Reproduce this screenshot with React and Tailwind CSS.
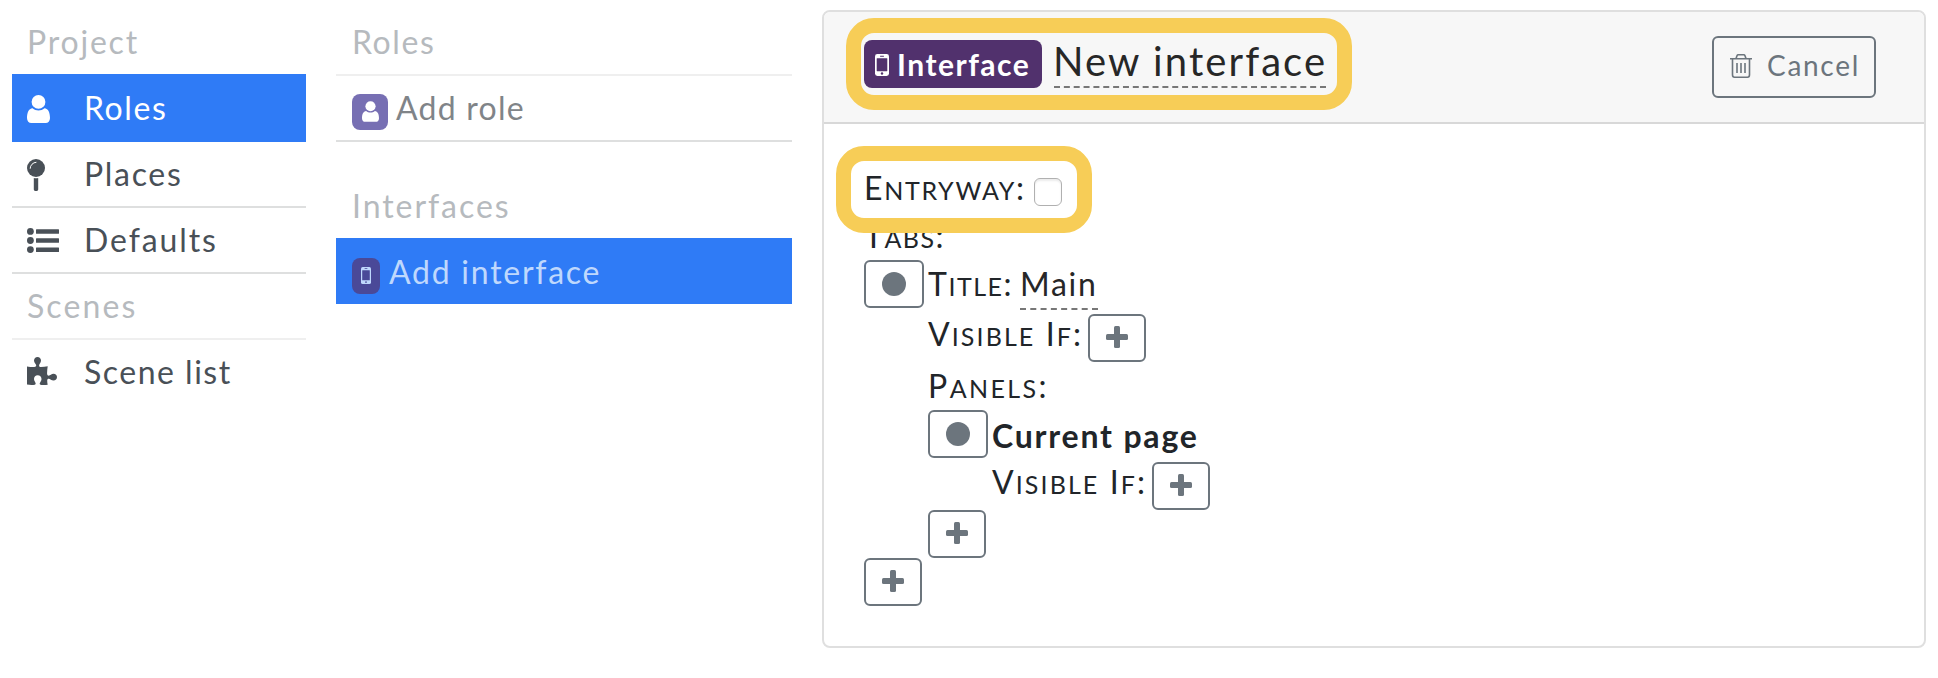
import React from "react";

function UserIcon({ className }) {
  return (
    <svg className={className} viewBox="0 0 23 28" fill="currentColor">
      <path d="M5.600 13.200C7.200 14.700 9.300 15.400 11.500 15.400s4.300-.7 5.900-2.200c4 .2 5.600 4.800 5.600 9.800 0 3-1.900 5-4.300 5H4.300C1.900 28 0 26 0 23c0-5 1.600-9.600 5.600-9.800Z" />
      <circle cx="11.500" cy="6.900" r="6.900" />
    </svg>
  );
}

function PhoneIcon({ className, hole }) {
  return (
    <svg className={className} viewBox="0 0 14 22" preserveAspectRatio="none" fill="currentColor">
      <rect width="14" height="22" rx="2.400" />
      <rect x="1.700" y="4.200" width="10.600" height="13" rx=".4" className={hole} />
      <rect x="5" y="1.700" width="4" height="1" rx=".4" className={hole} />
      <circle cx="7" cy="19.500" r="1.200" className={hole} />
    </svg>
  );
}

function PinIcon({ className }) {
  return (
    <svg className={className} viewBox="0 0 18 32" fill="currentColor">
      <circle cx="9" cy="9" r="9" />
      <path d="M6.800 19.100q2.200.5 4.400 0v11.500q0 1.400-1.400 1.400H8.200q-1.400 0-1.400-1.400Z" />
      <path d="M3.200 9.300A6 6 0 0 1 9 3.300" fill="none" stroke="#fff" strokeWidth="1" strokeLinecap="round" />
    </svg>
  );
}

function ListIcon({ className }) {
  return (
    <svg className={className} viewBox="0 0 32 25" fill="currentColor">
      <circle cx="3.400" cy="3.400" r="3.400" />
      <circle cx="3.400" cy="12.500" r="3.400" />
      <circle cx="3.400" cy="21.600" r="3.400" />
      <rect x="9" y="1.200" width="23" height="4.500" rx=".5" />
      <rect x="9" y="10.300" width="23" height="4.500" rx=".5" />
      <rect x="9" y="19.400" width="23" height="4.500" rx=".5" />
    </svg>
  );
}

function PuzzleIcon({ className }) {
  return (
    <svg className={className} viewBox="0 0 30 28" fill="currentColor">
      <path d="M0 9.400c2.500.4 5 .7 7.300.6 1.400-.1 2-.7 1.900-1.600C9 7 7 5.800 7 3.600 7 1.500 8.500 0 10.500 0S14 1.500 14 3.600c0 2.100-1.800 3.300-1.900 4.900-.1 1 .6 1.500 1.900 1.500 2.200 0 4.500-.3 6.700-.7-.3 2.500-.7 5-.6 7.500.1 1.300.7 1.900 1.600 1.900 1.500-.1 2.700-1.900 4.800-1.900S30 18.200 30 20.100c0 2-1.400 3.500-3.500 3.500s-3.300-1.700-4.800-1.800c-.9 0-1.500.6-1.500 1.900 0 1.400.2 2.500.5 4-2.500.3-4.900.5-7.200.1-.9-.2-1-.9-.7-1.600.5-1.200 1.700-2.300 1.700-4.200 0-2.300-1.600-3.700-3.800-3.700S7 19.700 7 22c0 1.900 1.300 3 1.600 4.200.2.800 0 1.300-.8 1.500C5.200 28.200 2.500 28 0 27.600Z" />
    </svg>
  );
}

function TrashIcon({ className }) {
  return (
    <svg className={className} viewBox="0 0 22 24" fill="none" stroke="currentColor" strokeWidth="1.600">
      <path d="M0 4.800h22M6 4.500l1-2.800Q7.300.8 8.300.8h5.400q1 0 1.300.9l1 2.800M2.500 5v15.800q0 2.400 2 2.400h13q2 0 2-2.400V5M7 9v10M11 9v10M15 9v10" />
    </svg>
  );
}

function Row({ children, className = "" }) {
  return <div className={`flex h-[66px] items-start border-b-2 leading-[64px] whitespace-pre ${className}`}>{children}</div>;
}

function NavItem({ icon, label, spacing, className = "border-[#dedfdf] text-[#495057]" }) {
  return (
    <Row className={`px-[15px] ${className}`}>
      <span className="w-[57px] shrink-0">{icon}</span>
      <span className={spacing}>{label}</span>
    </Row>
  );
}

function BoxButton({ kind }) {
  return (
    <button className={`flex h-12 shrink-0 items-start rounded-md border-2 border-[#6c757d] pt-[10px] pl-4 text-[#6c757d] ${kind === "dot" ? "w-[60px]" : "w-[58px]"}`}>
      {kind === "dot" ? (
        <svg className="size-6" viewBox="0 0 24 24" fill="currentColor"><circle cx="12" cy="12" r="12" /></svg>
      ) : (
        <svg className="size-[22px]" viewBox="0 0 22 22" fill="currentColor">
          <rect x="8" width="6" height="22" rx="1.500" />
          <rect y="8" width="22" height="6" rx="1.500" />
        </svg>
      )}
    </button>
  );
}

// Small-caps label: lower-case runs are set as reduced capitals.
function Label({ text, className = "" }) {
  return (
    <span className={className}>
      {text.split(/([a-z]+)/).map((run, i) =>
        i % 2 ? <span key={i} className="text-[25px] leading-none uppercase">{run}</span> : run
      )}
    </span>
  );
}

function VisibleIf() {
  return (
    <div className="flex h-[52px] items-start leading-[48px]">
      <span className="w-40 shrink-0 whitespace-nowrap"><Label text="Visible If:" className="tracking-[2.1px]" /></span>
      <div className="pt-1"><BoxButton kind="plus" /></div>
    </div>
  );
}

export default function App() {
  return (
    <div className="flex h-[678px] w-[1938px] items-start bg-white pr-3 pl-3 font-[Lato,sans-serif] text-[32px] text-[#212529]">
      <nav className="w-[294px] shrink-0 pt-[10px]">
        <Row className="border-transparent px-[15px] text-[#b6babe]"><span className="tracking-[1.8px]">Project</span></Row>
        <NavItem icon={<UserIcon className="mt-[19px] h-7 w-[23px]" />} label="Roles" spacing="tracking-[1.6px]" className="relative border-[#2f7bf6] bg-[#2f7bf6] text-white shadow-[0_-2px_0_#2f7bf6]" />
        <NavItem icon={<PinIcon className="mt-[17px] h-8 w-[18px]" />} label="Places" spacing="tracking-[1.7px]" />
        <NavItem icon={<ListIcon className="mt-5 h-[25px] w-8" />} label="Defaults" spacing="tracking-[1.9px]" />
        <Row className="border-[#efefef] px-[15px] text-[#b6babe]"><span className="tracking-[2.1px]">Scenes</span></Row>
        <NavItem icon={<PuzzleIcon className="mt-[17px] h-7 w-[30px]" />} label="Scene list" spacing="tracking-[1.5px]" className="border-transparent text-[#495057]" />
      </nav>

      <div className="ml-[30px] w-[456px] shrink-0 pt-[10px]">
        <Row className="border-[#efefef] px-4 text-[#b6babe]"><span className="tracking-[1.6px]">Roles</span></Row>
        <Row className="border-[#dedfdf] px-4 text-[#808488]">
          <span className="mt-[18px] mr-2 flex size-9 items-start justify-center rounded-lg bg-[#776fb3] pt-[7px] text-white"><UserIcon className="h-[21px] w-[17px]" /></span>
          <span className="tracking-[1.25px]">Add role</span>
        </Row>
        <Row className="mt-8 border-transparent px-4 text-[#b6babe]"><span className="tracking-[1.95px]">Interfaces</span></Row>
        <div className="-mt-0.5 flex h-[66px] items-start bg-[#2f7bf6] px-4 pt-0.5 leading-[64px] text-[#bfd8fd]">
          <span className="mt-[18px] mr-[9px] flex h-9 w-7 items-start justify-center rounded-lg bg-[#4a4998] pt-[9px]"><PhoneIcon className="h-[17px] w-[10px]" hole="fill-[#4a4998]" /></span>
          <span className="tracking-[1.75px]">Add interface</span>
        </div>
      </div>

      <main className="relative mt-[10px] ml-[30px] h-[638px] w-[1104px] shrink-0 rounded-lg border-2 border-[#dfdfdf]">
        <header className="flex h-28 items-start justify-between rounded-t-md border-b-2 border-[#d8d8d8] bg-[#f7f7f7] pr-12 pl-10">
          <div className="mt-7 flex items-start">
            <span className="flex h-12 w-[178px] items-start rounded-lg bg-[#51316d] text-white">
              <PhoneIcon className="mt-[14px] ml-[11px] h-[22px] w-[14px] shrink-0" hole="fill-[#51316d]" />
              <span className="ml-2 text-[30px] leading-[49px] font-bold tracking-[1.5px]">Interface</span>
            </span>
            <span className="ml-3 h-12 w-[272px] border-b-2 border-dashed border-[#777] text-[40px] leading-[43px] tracking-[2.1px] whitespace-nowrap text-[#272727] indent-[-1px]">New interface</span>
          </div>
          <button className="mt-6 flex h-[62px] w-[164px] items-start rounded-md border-2 border-[#6c757d] pl-4 text-[28px] leading-[55px] text-[#6c757d]">
            <TrashIcon className="mt-4 h-6 w-[22px] shrink-0" />
            <span className="ml-[15px] tracking-[1.7px]">Cancel</span>
          </button>
        </header>

        <div className="p-10 leading-[48px]">
          <div className="flex h-12 items-start">
            <span className="w-[170px] shrink-0 whitespace-nowrap"><Label text="Entryway:" className="tracking-[1.7px]" /></span>
            <input type="checkbox" className="mt-[14px] size-7 appearance-none rounded-md border border-[#b0b0b0] bg-white shadow-[inset_0_2px_2px_#ececec]" />
          </div>
          <div className="h-12"><Label text="Tabs:" className="tracking-[1.5px]" /></div>
          <div className="flex items-start">
            <BoxButton kind="dot" />
            <div className="ml-1">
              <div className="flex h-[50px] items-start">
                <span className="w-[92px] shrink-0 whitespace-nowrap"><Label text="Title:" className="tracking-[1.5px]" /></span>
                <span className="h-[50px] w-[78px] border-b-2 border-dashed border-[#777] tracking-[1.7px] text-[#272727]">Main</span>
              </div>
              <VisibleIf />
              <div className="h-12"><Label text="Panels:" className="tracking-[2.4px]" /></div>
              <div className="flex items-start">
                <BoxButton kind="dot" />
                <div className="ml-1">
                  <div className="h-12 leading-[51px] font-bold"><span className="tracking-[1.8px]">Current page</span></div>
                  <VisibleIf />
                </div>
              </div>
              <BoxButton kind="plus" />
            </div>
          </div>
          <BoxButton kind="plus" />
        </div>

        <div className="pointer-events-none absolute top-[6px] left-[21.500px] h-[91.500px] w-[506px] rounded-[28px] border-[15px] border-[#f7cd57]" />
        <div className="pointer-events-none absolute top-[134px] left-[11.500px] h-[86.500px] w-[256px] rounded-[28px] border-[15px] border-[#f7cd57]" />
      </main>
    </div>
  );
}
